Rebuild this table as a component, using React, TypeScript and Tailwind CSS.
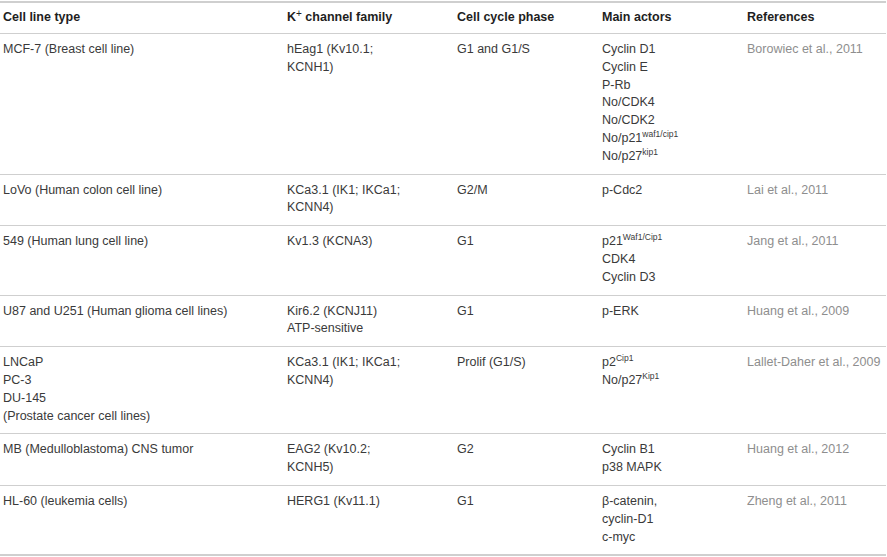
import React from 'react'

type Row = {
  cell: React.ReactNode[]
  channel: React.ReactNode[]
  phase: React.ReactNode[]
  actors: React.ReactNode[]
  refs: string
}

const Sup = ({ children }: { children: React.ReactNode }) => (
  <span className="relative -top-[5px] align-baseline text-[8.5px] leading-none">{children}</span>
)

const rows: Row[] = [
  {
    cell: ['MCF-7 (Breast cell line)'],
    channel: ['hEag1 (Kv10.1;', 'KCNH1)'],
    phase: ['G1 and G1/S'],
    actors: [
      'Cyclin D1',
      'Cyclin E',
      'P-Rb',
      'No/CDK4',
      'No/CDK2',
      <>No/p21<Sup>waf1/cip1</Sup></>,
      <>No/p27<Sup>kip1</Sup></>,
    ],
    refs: 'Borowiec et al., 2011',
  },
  {
    cell: ['LoVo (Human colon cell line)'],
    channel: ['KCa3.1 (IK1; IKCa1;', 'KCNN4)'],
    phase: ['G2/M'],
    actors: ['p-Cdc2'],
    refs: 'Lai et al., 2011',
  },
  {
    cell: ['549 (Human lung cell line)'],
    channel: ['Kv1.3 (KCNA3)'],
    phase: ['G1'],
    actors: [<>p21<Sup>Waf1/Cip1</Sup></>, 'CDK4', 'Cyclin D3'],
    refs: 'Jang et al., 2011',
  },
  {
    cell: ['U87 and U251 (Human glioma cell lines)'],
    channel: ['Kir6.2 (KCNJ11)', 'ATP-sensitive'],
    phase: ['G1'],
    actors: ['p-ERK'],
    refs: 'Huang et al., 2009',
  },
  {
    cell: ['LNCaP', 'PC-3', 'DU-145', '(Prostate cancer cell lines)'],
    channel: ['KCa3.1 (IK1; IKCa1;', 'KCNN4)'],
    phase: ['Prolif (G1/S)'],
    actors: [<>p2<Sup>Cip1</Sup></>, <>No/p27<Sup>Kip1</Sup></>],
    refs: 'Lallet-Daher et al., 2009',
  },
  {
    cell: ['MB (Medulloblastoma) CNS tumor'],
    channel: ['EAG2 (Kv10.2;', 'KCNH5)'],
    phase: ['G2'],
    actors: ['Cyclin B1', 'p38 MAPK'],
    refs: 'Huang et al., 2012',
  },
  {
    cell: ['HL-60 (leukemia cells)'],
    channel: ['HERG1 (Kv11.1)'],
    phase: ['G1'],
    actors: ['β-catenin,', 'cyclin-D1', 'c-myc'],
    refs: 'Zheng et al., 2011',
  },
]

const grid = 'grid grid-cols-[284px_170px_145px_145px_1fr]'

function Lines({ items }: { items: React.ReactNode[] }) {
  return (
    <div className="pl-[3px]">
      {items.map((t, i) => (
        <div key={i} className="whitespace-nowrap">
          {t}
        </div>
      ))}
    </div>
  )
}

export default function App() {
  return (
    <div
      className="h-[557px] w-[887px] overflow-hidden bg-white text-[12.5px] leading-[17.8px] text-[#3a3a3a]"
      style={{ fontFamily: '"Liberation Sans", Arial, sans-serif' }}
    >
      <div className="mt-[1px] w-[886px] border-t-2 border-[#cfcfcf]">
        <div className={`${grid} h-[31px] items-center border-b border-[#cfcfcf] font-bold text-[#1e1e1e]`}>
          <div className="pl-[3px]">Cell line type</div>
          <div className="pl-[3px]">
            K<span className="relative -top-[4px] align-baseline text-[10px] font-normal leading-none">+</span> channel family
          </div>
          <div className="pl-[3px]">Cell cycle phase</div>
          <div className="pl-[3px]">Main actors</div>
          <div className="pl-[3px]">References</div>
        </div>
        {rows.map((r, i) => (
          <div
            key={i}
            className={`${grid} border-b border-[#cfcfcf] pt-[7px] pb-[8px] ${i === rows.length - 1 ? 'border-b-2' : ''}`}
          >
            <Lines items={r.cell} />
            <Lines items={r.channel} />
            <Lines items={r.phase} />
            <Lines items={r.actors} />
            <div className="whitespace-nowrap pl-[3px] text-[#8e8e8e]">{r.refs}</div>
          </div>
        ))}
      </div>
    </div>
  )
}
